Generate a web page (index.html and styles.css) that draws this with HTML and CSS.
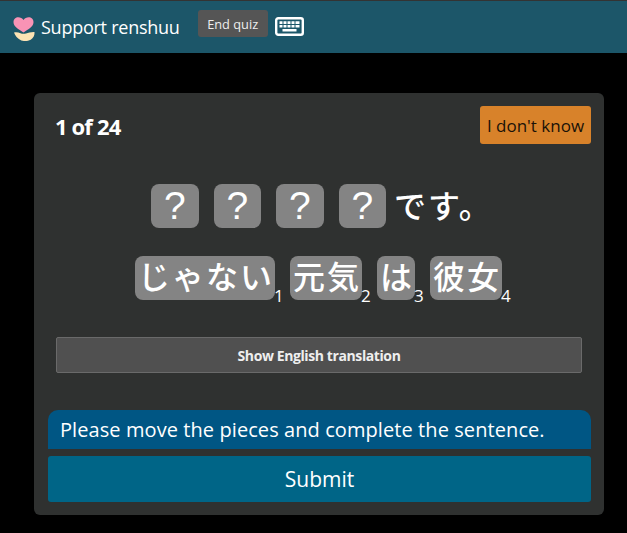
FILE: index.html
```html
<!DOCTYPE html>
<html lang="en">
<head>
<meta charset="utf-8">
<title>renshuu quiz</title>
<link rel="stylesheet" href="styles.css">
</head>
<body>
<header class="topbar">
  <a class="support">
    <svg class="heart" viewBox="0 0 22 25" width="22" height="25" aria-hidden="true">
      <path d="M10.500 15.500C5.500 12 .5 9.500.5 5.200.5 2.200 2.800.3 5.300.3c2.100 0 4 1 5.200 2.700C11.700 1.300 13.600.3 15.700.3c2.500 0 4.800 1.900 4.800 4.900 0 4.300-5 6.800-10 10.300z" fill="#f993b5"/>
      <path d="M1 15.500c2.500-.6 4.500-.2 6.500.7 1.500.7 3.500.9 5.500.3 2.500-.7 5-1.700 8.500-1.500.4 3-1.200 6.200-3.800 7.700-2.500 1.300-5.500 1.500-8.200 1C6.500 23.200 2.500 20 1 15.500z" fill="#fce3b4"/>
    </svg>
    <span>Support renshuu</span>
  </a>
  <button class="endquiz">End quiz</button>
  <svg class="keyboard" viewBox="0 0 29 19" width="29" height="19" aria-hidden="true">
    <rect x="1.200" y="1.200" width="26.600" height="16.600" rx="2" fill="none" stroke="#fff" stroke-width="2.400"/>
    <path d="M4.500 4.200h3v2.800h-3zM8.500 4.200h3v2.800h-3zM12.500 4.200h3v2.800h-3zM16.500 4.200h3v2.800h-3zM20.500 4.200h4v2.800h-4zM4.500 8h3v2.600h-3zM8.500 8h3v2.600h-3zM12.500 8h3v2.600h-3zM16.500 8h3v2.600h-3zM20.500 8h4v2.600h-4zM7.500 12h14v2.500h-14z" fill="#fff"/>
  </svg>
</header>
<main class="page">
  <section class="card">
    <div class="card-head">
      <div class="progress">1 of 24</div>
      <button class="dontknow">I don't know</button>
    </div>
    <div class="answer">
      <span class="slot">?</span>
      <span class="slot">?</span>
      <span class="slot">?</span>
      <span class="slot">?</span>
      <span class="ending">です。</span>
    </div>
    <div class="pieces">
      <span class="piece-wrap"><span class="piece">じゃない</span><sub class="num">1</sub></span>
      <span class="piece-wrap"><span class="piece">元気</span><sub class="num">2</sub></span>
      <span class="piece-wrap"><span class="piece">は</span><sub class="num">3</sub></span>
      <span class="piece-wrap"><span class="piece">彼女</span><sub class="num">4</sub></span>
    </div>
    <button class="translate">Show English translation</button>
    <div class="notice">Please move the pieces and complete the sentence.</div>
    <button class="submit">Submit</button>
  </section>
</main>
</body>
</html>
```
FILE: styles.css
```css
* { box-sizing: border-box; }
html, body { margin: 0; padding: 0; }
body {
  background: #000;
  color: #fff;
  font-family: "Open Sans", "Noto Sans CJK JP", sans-serif;
  height: 533px;
  overflow: hidden;
}
button { font-family: inherit; cursor: pointer; }
.topbar {
  height: 53px;
  background: #1c5669;
  border-top: 1px solid #333;
  display: flex;
  align-items: flex-start;
}
.support {
  display: flex;
  align-items: flex-start;
  margin: 16px 0 0 13px;
  font-size: 18px;
  line-height: 24px;
  letter-spacing: -0.25px;
  color: #fff;
}
.support span { margin-top: -2px; }
.heart { margin-right: 6px; flex: none; }
.endquiz {
  margin: 9px 0 0 18px;
  width: 70px;
  height: 27px;
  padding: 0;
  background: #555;
  color: #eee;
  border: 0;
  border-radius: 3px;
  font-size: 12.8px;
}
.keyboard { margin: 16px 0 0 7px; flex: none; }
.page { padding: 40px 23px 0 34px; }
.card {
  height: 422px;
  background: #2f3130;
  border-radius: 6px;
  padding: 13px 13px 13px 14px;
  display: flex;
  flex-direction: column;
}
.card-head {
  display: flex;
  justify-content: space-between;
  align-items: flex-start;
}
.progress {
  margin: 7px 0 0 7px;
  font-size: 22px;
  font-weight: 700;
  line-height: 27px;
  letter-spacing: -0.85px;
}
.dontknow {
  width: 111px;
  height: 38px;
  padding: 0;
  background: #d8822a;
  color: #1a1208;
  border: 0;
  border-radius: 3px;
  font-size: 17px;
}
.answer {
  display: flex;
  justify-content: flex-start;
  align-items: flex-start;
  gap: 15px;
  margin: 40px 0 0 103px;
  height: 44px;
}
.slot {
  width: 47.5px;
  height: 44px;
  background: #848484;
  border-radius: 8px;
  text-align: center;
  font-size: 39px;
  line-height: 43px;
  font-family: "Liberation Sans", sans-serif;
}
.ending {
  margin-left: -7px;
  font-size: 32px;
  font-weight: 500;
  line-height: 40px;
  letter-spacing: 2px;
  font-family: "Noto Sans CJK JP", sans-serif;
}
.pieces {
  display: flex;
  margin: 28px 0 0 87px;
  height: 44px;
}
.piece-wrap { display: flex; align-items: flex-end; margin-right: 5px; }
.piece {
  height: 44px;
  padding: 0 1px 0 3px;
  background: #848484;
  border-radius: 8px;
  font-size: 32px;
  font-weight: 500;
  line-height: 39px;
  letter-spacing: 2px;
  font-family: "Noto Sans CJK JP", sans-serif;
}
.num {
  font-size: 17px;
  line-height: 16px;
  margin-bottom: -4px;
  margin-left: -1px;
  width: 11px;
}
.translate {
  margin: 37px 9px 0 8px;
  height: 36px;
  padding: 0;
  background: #505050;
  color: #eee;
  border: 1px solid #6a6a6a;
  border-radius: 2px;
  font-size: 14px;
  font-weight: 700;
  letter-spacing: -0.4px;
}
.notice {
  margin-top: 37px;
  height: 39px;
  background: #005684;
  border-radius: 10px 10px 0 0;
  padding: 0 12px;
  font-size: 20px;
  line-height: 39px;
  letter-spacing: 0.08px;
}
.submit {
  margin-top: 7px;
  height: 46px;
  padding: 0 0 1px;
  background: #006587;
  color: #fff;
  border: 0;
  border-radius: 3px;
  font-size: 21px;
}
```
